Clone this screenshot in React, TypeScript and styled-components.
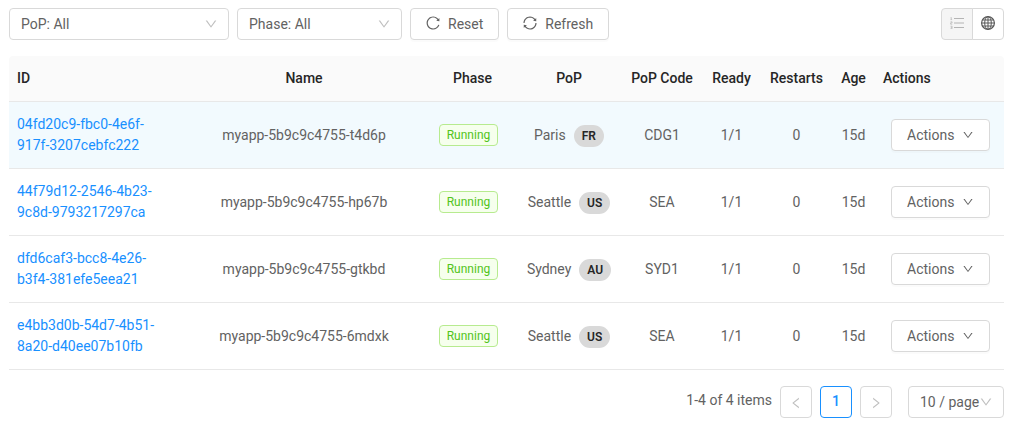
import React from "react";
import styled, { createGlobalStyle } from "styled-components";
import {
  AiOutlineDown,
  AiOutlineLeft,
  AiOutlineReload,
  AiOutlineRight,
  AiOutlineSync,
} from "react-icons/ai";

const GlobalStyle = createGlobalStyle`
  *, *::before, *::after { box-sizing: border-box; }
  body {
    margin: 0;
    background: #fff;
    color: #626262;
    font-family: Roboto, "Liberation Sans", sans-serif;
    font-size: 14px;
    line-height: 21px;
  }
  button, select { font: inherit; color: inherit; }
`;

const Page = styled.main`
  padding: 8px 14px 3px 9px;
`;

const Toolbar = styled.div`
  display: flex;
  gap: 8px;
  margin-bottom: 16px;
`;

const SelectBox = styled.div<{ $width: number }>`
  position: relative;
  width: ${(p) => p.$width}px;
  height: 32px;
  svg {
    position: absolute;
    top: 9px;
    right: 11px;
    color: #bfbfbf;
    pointer-events: none;
  }
`;

const NativeSelect = styled.select`
  appearance: none;
  width: 100%;
  height: 100%;
  padding: 0 11px;
  border: 1px solid #d9d9d9;
  border-radius: 4px;
  background: #fff;
`;

const Button = styled.button`
  display: inline-flex;
  align-items: center;
  gap: 8px;
  height: 32px;
  padding: 0 15px;
  border: 1px solid #d9d9d9;
  border-radius: 4px;
  background: #fff;
  box-shadow: 0 2px 0 rgba(0, 0, 0, 0.015);
`;

const ToolButton = styled(Button)`
  gap: 7px;
  padding-left: 14px;
  svg { margin-bottom: 2px; }
`;

const ViewSwitch = styled.div`
  display: flex;
  margin-left: auto;
`;

const ViewButton = styled.button<{ $active?: boolean }>`
  display: flex;
  align-items: center;
  justify-content: center;
  width: 32px;
  height: 32px;
  padding: 0 0 2px;
  border: 1px solid #d9d9d9;
  background: ${(p) => (p.$active ? "#f5f5f5" : "#fff")};
  color: ${(p) => (p.$active ? "#b4b4b4" : "#595959")};
  &:first-child { border-radius: 4px 0 0 4px; }
  &:last-child { border-radius: 0 4px 4px 0; margin-left: -1px; }
`;

const Table = styled.table`
  width: 100%;
  table-layout: fixed;
  border-collapse: separate;
  border-spacing: 0;
`;

const Column = styled.col<{ $width?: number }>`
  width: ${(p) => (p.$width ? `${p.$width}px` : "auto")};
`;

const HeadCell = styled.th<{ $left?: boolean }>`
  padding: 12px 8px;
  border-bottom: 1px solid #e8e8e8;
  background: #fafafa;
  color: #262626;
  font-weight: 500;
  text-align: ${(p) => (p.$left ? "left" : "center")};
  white-space: nowrap;
  &:first-child { border-top-left-radius: 4px; }
  &:last-child { border-top-right-radius: 4px; }
`;

const Row = styled.tr<{ $highlighted: boolean }>`
  background: ${(p) => (p.$highlighted ? "#f2fafe" : "#fff")};
`;

const Cell = styled.td<{ $left?: boolean }>`
  padding: 12px 8px;
  border-bottom: 1px solid #e8e8e8;
  text-align: ${(p) => (p.$left ? "left" : "center")};
`;

const ActionCell = styled(Cell)`
  padding: 0 16px;
`;

const IdLink = styled.a`
  color: #1890ff;
  text-decoration: none;
`;

const Tag = styled.span`
  display: inline-block;
  margin-right: 8px;
  padding: 0 7px;
  border: 1px solid #b7eb8f;
  border-radius: 4px;
  background: #f6ffed;
  color: #52c41a;
  font-size: 12px;
  line-height: 20px;
  vertical-align: middle;
`;

const Place = styled.div`
  display: flex;
  align-items: baseline;
  justify-content: center;
  gap: 8px;
  padding-top: 2px;
`;

const Country = styled.span`
  padding: 0 8px;
  border-radius: 11px;
  background: #d9d9d9;
  color: #262626;
  font-size: 12px;
  font-weight: 600;
  line-height: 22px;
`;

const Pager = styled.nav`
  display: flex;
  justify-content: flex-end;
  gap: 8px;
  margin-top: 16px;
`;

const Total = styled.span`
  padding-top: 4px;
`;

const PageButton = styled.button<{ $current?: boolean }>`
  display: flex;
  align-items: center;
  justify-content: center;
  width: 32px;
  height: 32px;
  padding: ${(p) => (p.$current ? "0 0 1px" : "2px 0 0")};
  border: 1px solid ${(p) => (p.$current ? "#1890ff" : "#d9d9d9")};
  border-radius: 4px;
  background: #fff;
  color: ${(p) => (p.$current ? "#1890ff" : "#bfbfbf")};
  font-weight: ${(p) => (p.$current ? 500 : 400)};
`;

const PageSize = styled(SelectBox)`
  margin-left: 8px;
`;

const GlobeIcon = () => (
  <svg width="14" height="14" viewBox="0 0 14 14" fill="none" stroke="currentColor" aria-hidden="true">
    <circle cx="7" cy="7" r="6.4" strokeWidth="1.2" />
    <ellipse cx="7" cy="7" rx="3.3" ry="6.4" />
    <path d="M7 .6v12.8M.6 7h12.8M1.5 4h11M1.5 10h11" />
  </svg>
);

const NumberedListIcon = () => (
  <svg width="14" height="12" viewBox="0 0 14 12" fill="none" stroke="currentColor" aria-hidden="true">
    <path d="M4 1.5h10M4 6h10M4 10.5h10" />
    <path
      strokeWidth=".7"
      d="M.6.8 1.3.4v2.2M.5 2.6h1.6M.5 4.8h1.6v1.1H.6v1.3h1.6M.5 9.2h1.6v2.4H.5M.8 10.4h1.2"
    />
  </svg>
);

const columns = [
  { title: "ID", width: 170, left: true },
  { title: "Name" },
  { title: "Phase", width: 87 },
  { title: "PoP", width: 106 },
  { title: "PoP Code", width: 80 },
  { title: "Ready", width: 59 },
  { title: "Restarts", width: 71 },
  { title: "Age", width: 43 },
  { title: "Actions", width: 129, left: true },
];

const instances = [
  { id: "04fd20c9-fbc0-4e6f-917f-3207cebfc222", name: "myapp-5b9c9c4755-t4d6p", city: "Paris", country: "FR", code: "CDG1" },
  { id: "44f79d12-2546-4b23-9c8d-9793217297ca", name: "myapp-5b9c9c4755-hp67b", city: "Seattle", country: "US", code: "SEA" },
  { id: "dfd6caf3-bcc8-4e26-b3f4-381efe5eea21", name: "myapp-5b9c9c4755-gtkbd", city: "Sydney", country: "AU", code: "SYD1" },
  { id: "e4bb3d0b-54d7-4b51-8a20-d40ee07b10fb", name: "myapp-5b9c9c4755-6mdxk", city: "Seattle", country: "US", code: "SEA" },
];

export default function App() {
  return (
    <Page>
      <GlobalStyle />
      <Toolbar>
        <SelectBox $width={220}>
          <NativeSelect aria-label="PoP">
            <option>PoP: All</option>
          </NativeSelect>
          <AiOutlineDown size={14} />
        </SelectBox>
        <SelectBox $width={165}>
          <NativeSelect aria-label="Phase">
            <option>Phase: All</option>
          </NativeSelect>
          <AiOutlineDown size={14} />
        </SelectBox>
        <ToolButton type="button">
          <AiOutlineReload size={16} />
          Reset
        </ToolButton>
        <ToolButton type="button">
          <AiOutlineSync size={16} />
          Refresh
        </ToolButton>
        <ViewSwitch>
          <ViewButton type="button" $active aria-label="List view">
            <NumberedListIcon />
          </ViewButton>
          <ViewButton type="button" aria-label="Map view">
            <GlobeIcon />
          </ViewButton>
        </ViewSwitch>
      </Toolbar>

      <Table>
        <colgroup>
          {columns.map((c) => (
            <Column key={c.title} $width={c.width} />
          ))}
        </colgroup>
        <thead>
          <tr>
            {columns.map((c) => (
              <HeadCell key={c.title} $left={c.left} scope="col">
                {c.title}
              </HeadCell>
            ))}
          </tr>
        </thead>
        <tbody>
          {instances.map((item, index) => (
            <Row key={item.id} $highlighted={index === 0}>
              <Cell $left>
                <IdLink href={`#${item.id}`}>{item.id}</IdLink>
              </Cell>
              <Cell>{item.name}</Cell>
              <Cell>
                <Tag>Running</Tag>
              </Cell>
              <Cell>
                <Place>
                  {item.city}
                  <Country>{item.country}</Country>
                </Place>
              </Cell>
              <Cell>{item.code}</Cell>
              <Cell>1/1</Cell>
              <Cell>0</Cell>
              <Cell>15d</Cell>
              <ActionCell $left>
                <Button type="button">
                  Actions
                  <AiOutlineDown size={12} />
                </Button>
              </ActionCell>
            </Row>
          ))}
        </tbody>
      </Table>

      <Pager aria-label="Pagination">
        <Total>1-4 of 4 items</Total>
        <PageButton type="button" disabled aria-label="Previous page">
          <AiOutlineLeft size={14} />
        </PageButton>
        <PageButton type="button" $current aria-current="page">
          1
        </PageButton>
        <PageButton type="button" disabled aria-label="Next page">
          <AiOutlineRight size={14} />
        </PageButton>
        <PageSize $width={96}>
          <NativeSelect aria-label="Items per page">
            <option>10 / page</option>
          </NativeSelect>
          <AiOutlineDown size={14} />
        </PageSize>
      </Pager>
    </Page>
  );
}
